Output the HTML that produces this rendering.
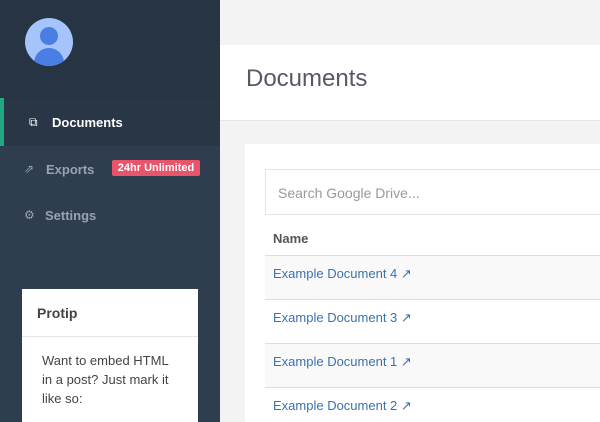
<!DOCTYPE html><html><head><style>
*{margin:0;padding:0;box-sizing:border-box}
html,body{width:600px;height:422px;overflow:hidden}
body{font-family:"Liberation Sans",sans-serif;background:#f3f3f3;position:relative}
.sb{position:absolute;left:0;top:0;width:220px;height:422px;background:#2f3e4f}
.top{position:absolute;left:0;top:0;width:220px;height:98px;background:#263443}
.av{position:absolute;left:25px;top:18px;width:48px;height:48px;border-radius:50%;background:#a4c4fb;overflow:hidden}
.av .h{position:absolute;left:15px;top:9px;width:18px;height:18px;border-radius:50%;background:#4a7ee2}
.av .b{position:absolute;left:9px;top:30px;width:30px;height:22px;border-radius:15px 15px 0 0;background:#4a7ee2}
.act{position:absolute;left:0;top:98px;width:220px;height:48px;background:#283646;border-left:4px solid #1fa985}
.nav{position:absolute;font-size:13px;font-weight:bold}
.ic{position:absolute;font-size:12px}
.badge{position:absolute;left:112px;top:160px;width:88px;height:16px;background:#e8546a;color:#fff;font-size:11px;font-weight:bold;text-align:center;line-height:16px;border-radius:2px}
.pro{position:absolute;left:22px;top:289px;width:176px;height:133px;background:#fff}
.hdr{position:absolute;left:220px;top:45px;width:380px;height:76px;background:#fff;border-bottom:1px solid #e5e5e5}
.card{position:absolute;left:245px;top:144px;width:355px;height:278px;background:#fff}
.srch{position:absolute;left:265px;top:169px;width:340px;height:46px;border:1px solid #e3e3e3;color:#999;font-size:14px;padding:15px 12px}
.row{position:absolute;left:265px;width:335px;height:44px;border-top:1px solid #ddd;color:#3a72ae;font-size:13px;padding:10px 8px}
.s{background:#f9f9f9}
</style></head><body>
<div class="sb"></div><div class="top"></div>
<div class="av"><div class="h"></div><div class="b"></div></div>
<div class="act"></div>
<div class="ic" style="left:29px;top:115px;color:#fff">⧉</div>
<div class="nav" style="left:52px;top:115px;color:#fff">Documents</div>
<div class="ic" style="left:24px;top:162px;color:#95a3b3">⇗</div>
<div class="nav" style="left:46px;top:162px;color:#95a3b3">Exports</div>
<div class="badge">24hr Unlimited</div>
<div class="ic" style="left:24px;top:208px;color:#95a3b3">⚙</div>
<div class="nav" style="left:45px;top:208px;color:#95a3b3">Settings</div>
<div class="pro"><div style="padding:16px 15px;font-weight:bold;color:#444;font-size:14px;border-bottom:1px solid #e5e5e5;height:48px">Protip</div>
<div style="padding:14px 20px;color:#444;font-size:13px;line-height:19px">Want to embed HTML in a post? Just mark it like so:</div></div>
<div class="hdr"><div style="position:absolute;left:26px;top:20px;font-size:24px;color:#555a64">Documents</div></div>
<div class="card"></div>
<div class="srch">Search Google Drive...</div>
<div style="position:absolute;left:273px;top:231px;font-size:13px;font-weight:bold;color:#555">Name</div>
<div class="row s" style="top:255px">Example Document 4 ↗</div>
<div class="row" style="top:299px">Example Document 3 ↗</div>
<div class="row s" style="top:343px">Example Document 1 ↗</div>
<div class="row" style="top:387px">Example Document 2 ↗</div>
</body></html>
